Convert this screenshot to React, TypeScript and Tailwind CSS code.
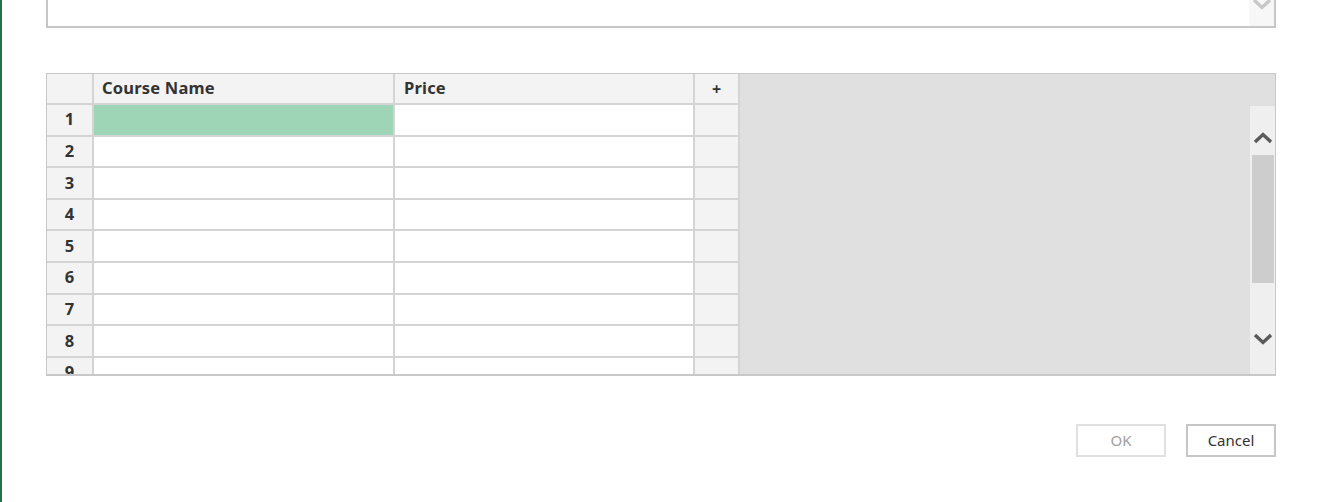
import { Fragment } from "react";

const rows = [1, 2, 3, 4, 5, 6, 7, 8, 9];

function Chevron({ up, className }: { up?: boolean; className?: string }) {
  return (
    <svg width="20" height="13" viewBox="0 0 20 13" className={className}>
      <polyline
        points={up ? "2,11 10,3.5 18,11" : "2,2 10,9.5 18,2"}
        fill="none"
        stroke="currentColor"
        strokeWidth="3.4"
      />
    </svg>
  );
}

export default function App() {
  return (
    <div className="flex h-[502px] w-full bg-white font-['Noto_Sans',sans-serif] text-[#333]">
      <div className="w-[2px] shrink-0 bg-[#217346]" />
      <div className="flex w-[1230px] flex-col ml-[44px]">
        {/* notes box, scrolled so only its bottom shows */}
        <div className="flex h-[28px] justify-end border-x-2 border-b-2 border-[#c6c6c6]">
          <div className="flex w-[25px] justify-center bg-[#f7f7f7]">
            <Chevron className="-mt-[2px] text-[#c8c8c8]" />
          </div>
        </div>

        {/* course grid */}
        <div className="mt-[45px] flex h-[303px] border border-b-2 border-[#c8c8c8] bg-[#e0e0e0]">
          <div className="grid h-full grid-cols-[47px_301px_300px_45px] content-start overflow-hidden bg-white">
            <div className="h-[31px] border-b-2 border-r-2 border-[#d4d4d4] bg-[#f3f3f3]" />
            <div className="flex h-[31px] items-center border-b-2 border-r-2 border-[#d4d4d4] bg-[#f3f3f3] pl-[8px] text-[16.5px] font-bold tracking-[0.2px]">
              Course Name
            </div>
            <div className="flex h-[31px] items-center border-b-2 border-r-2 border-[#d4d4d4] bg-[#f3f3f3] pl-[9px] text-[16.5px] font-bold tracking-[0.2px]">
              Price
            </div>
            <div className="flex h-[31px] items-center justify-center border-b-2 border-r-2 border-[#d4d4d4] bg-[#f3f3f3] text-[16px] font-bold">
              +
            </div>
            {rows.map((n) => (
              <Fragment key={n}>
                <div className="flex h-[31.6px] items-center justify-center border-b-2 border-r-2 border-[#d4d4d4] bg-[#f3f3f3] text-[16.5px] font-bold">
                  {n}
                </div>
                <div
                  className={
                    n === 1
                      ? "h-[31.6px] border-b-2 border-r-2 border-[#d4d4d4] bg-[#9fd5b7]"
                      : "h-[31.6px] border-b-2 border-r-2 border-[#d4d4d4]"
                  }
                />
                <div className="h-[31.6px] border-b-2 border-r-2 border-[#d4d4d4]" />
                <div className="h-[31.6px] border-b-2 border-r-2 border-[#d4d4d4] bg-[#f3f3f3]" />
              </Fragment>
            ))}
          </div>
          <div className="flex flex-1 flex-col items-end">
            <div className="mt-[32px] flex w-[25px] flex-1 flex-col items-center bg-[#efefef]">
              <Chevron up className="mt-[25px] text-[#5a5a5a]" />
              <div className="mt-[11px] h-[128px] w-[22px] bg-[#cdcdcd]" />
              <Chevron className="mt-[50px] text-[#5a5a5a]" />
            </div>
          </div>
        </div>

        {/* dialog buttons */}
        <div className="mt-[48px] flex justify-end gap-[20px]">
          <button className="h-[33px] w-[90px] border-2 border-[#e0e0e0] text-[15px] text-[#a0a0a0]">
            OK
          </button>
          <button className="h-[33px] w-[90px] border-2 border-[#c6c6c6] text-[15px] text-[#333]">
            Cancel
          </button>
        </div>
      </div>
    </div>
  );
}
